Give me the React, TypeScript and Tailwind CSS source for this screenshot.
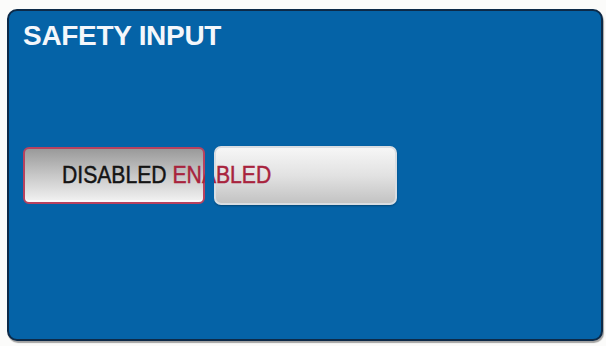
import React from 'react';

const font = { fontFamily: '"Liberation Sans", Arial, sans-serif' };

export default function App() {
  return (
    <div className="w-[606px] h-[346px] bg-[#fbfbfa] pt-[9px] pl-[7px]">
      <div className="w-[596px] h-[332px] rounded-[10px] border-2 border-[#0d2a48] bg-[#0563a7] shadow-[1px_2px_1px_rgba(0,0,0,0.35)] pt-[11px] pl-[14px] flex flex-col">
        <h1
          className="text-[28px] leading-none font-bold text-[#f4f7fb] tracking-[-0.3px]"
          style={font}
        >
          SAFETY INPUT
        </h1>

        <div className="mt-[97px] flex">
          {/* label spills over the gap and into the second button */}
          <div className="w-[182px] h-[57px] rounded-[6px] border-2 border-[#b8425f] bg-gradient-to-b from-[#9a9a9a] via-[#c8c8c8] to-[#f3f3f3] flex items-center pl-[37px] shadow-[inset_0_-2px_0_rgba(255,255,255,0.7)]">
            <span
              className="relative z-[5] inline-block whitespace-nowrap text-[23.5px] leading-none origin-left scale-x-[0.9] [-webkit-text-stroke:0.45px]"
              style={font}
            >
              <span className="text-[#141414]">DISABLED </span>
              <span className="text-[#a8233d]">ENABLED</span>
            </span>
          </div>
          <div className="relative z-10 w-[9px] h-[57px] bg-[#0563a7]" />
          <div className="relative z-0 w-[183px] h-[59px] -mt-[1px] rounded-[7px] border-2 border-[#d9dde2] bg-gradient-to-b from-[#f6f6f6] via-[#e2e2e2] to-[#c3c3c3] shadow-[0_1px_2px_rgba(0,0,0,0.3)]" />
        </div>
      </div>
    </div>
  );
}
